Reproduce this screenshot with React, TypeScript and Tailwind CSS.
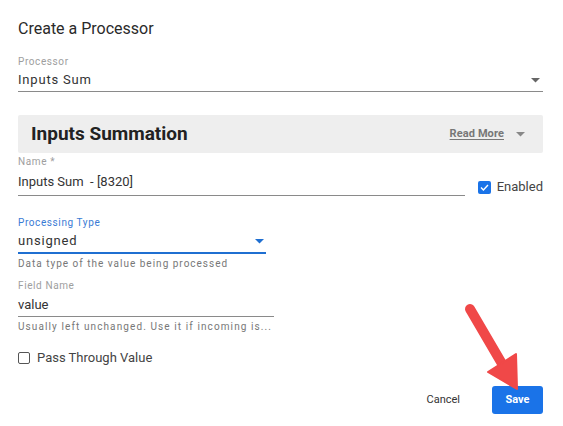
import React from "react";

function Caret({ className = "" }: { className?: string }) {
  return (
    <svg width="9" height="5" viewBox="0 0 9 5" className={className}>
      <path d="M0 0 L9 0 L4.5 4.5 Z" fill="currentColor" />
    </svg>
  );
}

export default function App() {
  return (
    <div
      className="relative w-[563px] h-[426px] bg-white pl-[18px] pr-[20px] pt-[19px] text-[#222]"
      style={{ fontFamily: "Roboto, 'Noto Sans', sans-serif" }}
    >
      <h1 className="text-[16px] leading-[20px] text-[#2a2a2a]">Create a Processor</h1>

      {/* Processor select */}
      <div className="mt-[17px]">
        <div className="text-[10px] leading-[12px] tracking-[0.6px] text-[#9e9e9e]">Processor</div>
        <div className="mt-[3px] flex items-center justify-between border-b border-[#8a8a8a] pb-[2px]">
          <span className="text-[13px] leading-[18px] tracking-[0.8px] text-[#333]">Inputs Sum</span>
          <Caret className="mr-[3px] text-[#666]" />
        </div>
      </div>

      {/* Summary box */}
      <div className="mt-[23px] h-[38px] flex items-center justify-between bg-[#eeeeee] rounded-[2px] pl-[13px] pr-[18px]">
        <span className="text-[19px] font-bold text-[#222]">Inputs Summation</span>
        <div className="flex items-center gap-[12px]">
          <span className="text-[11px] font-bold text-[#777] underline underline-offset-2 tracking-[0.1px]">Read More</span>
          <Caret className="text-[#888]" />
        </div>
      </div>

      {/* Name + enabled */}
      <div className="mt-[3px] flex items-end gap-[13px]">
        <div className="w-[448px]">
          <div className="text-[10px] leading-[12px] tracking-[0.6px] text-[#9e9e9e]">Name *</div>
          <div className="mt-[5px] border-b border-[#8a8a8a] pb-[4px] text-[13px] leading-[18px] text-[#333]">
            Inputs Sum&nbsp; - [8320]
          </div>
        </div>
        <label className="flex items-center gap-[6px]">
          <span className="w-[13px] h-[13px] rounded-[2px] bg-[#1a73e8] flex items-center justify-center">
            <svg width="9" height="7" viewBox="0 0 9 7">
              <path d="M1 3.6 L3.4 6 L8 1" stroke="white" strokeWidth="1.4" fill="none" />
            </svg>
          </span>
          <span className="text-[13px] leading-[18px] text-[#444]">Enabled</span>
        </label>
      </div>

      {/* Processing Type */}
      <div className="mt-[21px] w-[248px]">
        <div className="text-[10px] leading-[12px] tracking-[0.6px] text-[#3a7bd5]">Processing Type</div>
        <div className="mt-[3px] flex items-center justify-between border-b-2 border-[#1f6fd1] pb-[2px]">
          <span className="text-[13px] leading-[18px] tracking-[0.8px] text-[#333]">unsigned</span>
          <Caret className="mr-[2px] text-[#1f6fd1]" />
        </div>
        <div className="mt-[4px] text-[10px] leading-[12px] tracking-[1px] text-[#777] whitespace-nowrap">
          Data type of the value being processed
        </div>
      </div>

      {/* Field Name */}
      <div className="mt-[10px] w-[256px]">
        <div className="text-[10px] leading-[12px] tracking-[0.6px] text-[#9e9e9e]">Field Name</div>
        <div className="mt-[4px] border-b border-[#8a8a8a] pb-[2px] text-[13px] leading-[18px] text-[#333]">value</div>
        <div className="mt-[4px] text-[10px] leading-[12px] tracking-[1.1px] text-[#777] whitespace-nowrap">
          Usually left unchanged. Use it if incoming is...
        </div>
      </div>

      {/* Pass through */}
      <label className="mt-[16px] flex items-center gap-[7px]">
        <span className="w-[12px] h-[12px] rounded-[2px] border border-[#555]" />
        <span className="text-[13px] leading-[18px] text-[#444]">Pass Through Value</span>
      </label>

      {/* Actions */}
      <div className="mt-[19px] flex items-center justify-end gap-[32px]">
        <button className="text-[11px] text-[#333]">Cancel</button>
        <button className="w-[51px] h-[28px] rounded-[3px] bg-[#1a73e8] text-white text-[11px] font-bold">Save</button>
      </div>

      {/* Annotation arrow */}
      <svg className="absolute left-0 top-0 pointer-events-none" width="563" height="426">
        <line x1="470" y1="309" x2="501" y2="362" stroke="#f04848" strokeWidth="10" strokeLinecap="round" />
        <path d="M488 372 L516 354 L517 389 Z" fill="#f04848" stroke="#f04848" strokeWidth="2" strokeLinejoin="round" />
      </svg>
    </div>
  );
}
